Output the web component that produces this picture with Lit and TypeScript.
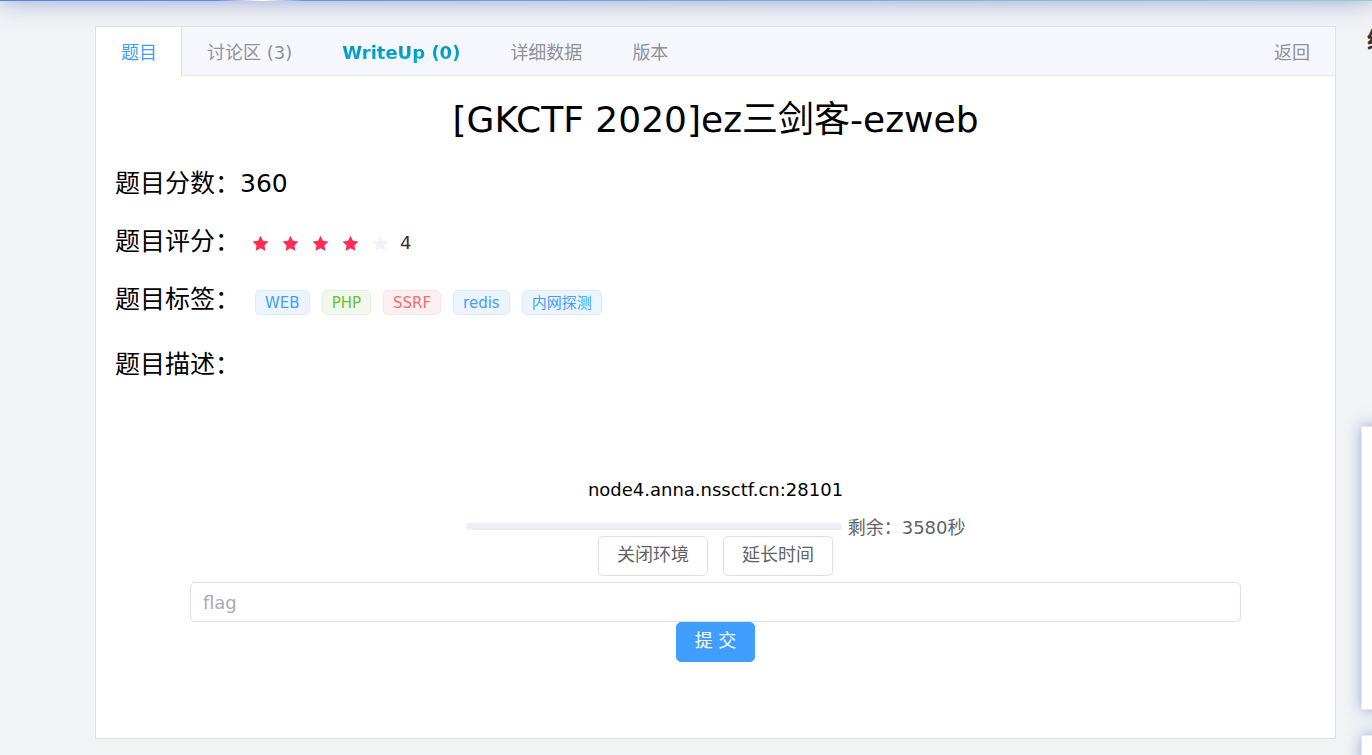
import { LitElement, html, css } from "lit";
import { customElement, state } from "lit/decorators.js";

interface Tab {
  label: string;
  hot?: boolean;
}

@customElement("star-rating")
class StarRating extends LitElement {
  static properties = { value: { type: Number } };
  declare value: number;

  static styles = css`
    :host {
      display: inline-flex;
      align-items: center;
    }
    .star {
      width: 21px;
      height: 21px;
      margin-right: 9px;
      fill: #eff2f7;
    }
    .on {
      fill: #ff2c54;
    }
    .value {
      font-size: 18px;
      line-height: 24px;
      color: #303133;
    }
  `;

  render() {
    return html`
      ${[1, 2, 3, 4, 5].map(
        (n) => html`<svg class=${n <= this.value ? "star on" : "star"} viewBox="0 0 1024 1024" aria-hidden="true">
          <path d="M283.84 867.84 512 747.776l228.16 119.936a6.4 6.4 0 0 0 9.28-6.72l-43.52-254.08 184.512-179.904a6.4 6.4 0 0 0-3.52-10.88l-255.104-37.12L517.76 147.904a6.4 6.4 0 0 0-11.52 0L392.192 379.072l-255.104 37.12a6.4 6.4 0 0 0-3.52 10.88L318.08 606.976l-43.584 254.08a6.4 6.4 0 0 0 9.28 6.72z"></path>
        </svg>`
      )}
      <span class="value">${this.value}</span>
    `;
  }
}

@customElement("app-root")
class AppRoot extends LitElement {
  @state() active = 0;

  tabs: Tab[] = [
    { label: "题目" },
    { label: "讨论区 (3)" },
    { label: "WriteUp (0)", hot: true },
    { label: "详细数据" },
    { label: "版本" },
  ];

  tags = [
    { text: "WEB", kind: "primary" },
    { text: "PHP", kind: "success" },
    { text: "SSRF", kind: "danger" },
    { text: "redis", kind: "primary" },
    { text: "内网探测", kind: "primary" },
  ];

  static styles = css`
    :host {
      display: block;
      min-height: 100vh;
      overflow: hidden;
      background: #f2f3f5;
      color: #000;
      font-family: Verdana, "DejaVu Sans", "Noto Sans CJK SC", sans-serif;
      font-size: 18px;
      line-height: 24px;
    }
    * {
      box-sizing: border-box;
    }
    .topbar {
      height: 60px;
      margin-top: -59px;
      background:
        radial-gradient(ellipse 45px 20px at 262px 100%, #fff, transparent) no-repeat,
        linear-gradient(90deg, #4688f1, #8fd0c8);
      box-shadow: 0 0 24px rgba(62, 79, 177, 0.5);
    }
    .page {
      display: grid;
      grid-template-columns: minmax(0, 1fr) 11px;
      column-gap: 25px;
      padding: 25px 0 16px 95px;
    }
    .panel {
      position: relative;
      background: #fff;
      border: 1px solid #dcdfe6;
      padding-bottom: 76px;
    }
    .tabs {
      display: flex;
      background: #f5f7fc;
      border-bottom: 1px solid #e4e7ed;
    }
    .tab {
      height: 49px;
      margin: 0 0 -1px;
      padding: 2px 24px 0 25px;
      border: 0;
      border-right: 1px solid transparent;
      background: none;
      color: #909399;
      font: inherit;
      cursor: pointer;
    }
    .tab.active {
      background: #fff;
      border-right-color: #dcdfe6;
      color: #409eff;
    }
    .hot {
      font-weight: bold;
      background: linear-gradient(#0288b8, #00b4dc);
      background-clip: text;
      -webkit-background-clip: text;
      color: transparent;
    }
    .back {
      margin-left: auto;
    }
    .body {
      padding: 20px 19px 0;
    }
    h1 {
      margin: 0;
      font-size: 36px;
      line-height: 48px;
      font-weight: 400;
      text-align: center;
    }
    .facts {
      margin: 21px 0 0;
    }
    .fact {
      display: flex;
      align-items: center;
      height: 58px;
      font-size: 25px;
      line-height: 34px;
    }
    .fact:first-child {
      height: 38px;
      margin-bottom: 10px;
    }
    .fact:last-child {
      height: 72px;
    }
    dt,
    dd {
      margin: 0;
    }
    dd.rating {
      display: flex;
      padding: 2px 0 0 10px;
    }
    .tags {
      display: flex;
      gap: 12px;
      padding: 4px 0 0 15px;
    }
    .tag {
      padding: 1px 9px 0;
      border: 1px solid #d9ecff;
      border-radius: 5px;
      background: #ecf5ff;
      color: #409eff;
      font-size: 15px;
      line-height: 22px;
    }
    .success {
      background: #f0f9eb;
      border-color: #e1f3d8;
      color: #67c23a;
    }
    .danger {
      background: #fef0f0;
      border-color: #fde2e2;
      color: #f56c6c;
    }
    .env {
      display: flex;
      flex-direction: column;
      align-items: center;
      padding-top: 77px;
    }
    .timer {
      display: flex;
      align-items: center;
      gap: 6px;
      width: 500px;
      max-width: 100%;
      margin-top: 14px;
      color: #606266;
    }
    .track {
      flex: 1;
      height: 7px;
      margin-bottom: 3px;
      border-radius: 4px;
      background: #ebeef5;
    }
    .row {
      display: flex;
      gap: 15px;
      margin-top: -4px;
    }
    .btn {
      height: 40px;
      padding: 0 18px 2px;
      border: 1px solid #dcdfe6;
      border-radius: 5px;
      background: #fff;
      color: #606266;
      font: inherit;
      cursor: pointer;
    }
    .form {
      display: flex;
      flex-direction: column;
      align-items: center;
      width: 1051px;
      max-width: 100%;
      margin-top: 6px;
    }
    .flag {
      width: 100%;
      height: 40px;
      padding: 0 12px;
      border: 1px solid #dcdfe6;
      border-radius: 5px;
      background: #fff;
      color: #606266;
      font: inherit;
      outline: none;
    }
    .flag::placeholder {
      color: #a8abb2;
      opacity: 1;
    }
    .submit {
      border-color: #409eff;
      background: #409eff;
      color: #fff;
    }
    .side {
      display: flex;
      flex-direction: column;
      width: 300px;
      height: 0;
    }
    .side h2 {
      margin: 0 0 370px 6px;
      font-size: 22px;
      line-height: 30px;
      color: #303133;
    }
    .card {
      flex: none;
      height: 284px;
      margin-bottom: 25px;
      background: #fff;
      border: 1px solid #e4e7ed;
      box-shadow: 0 0 14px rgba(62, 99, 187, 0.5);
    }
  `;

  render() {
    return html`
      <header class="topbar"></header>
      <div class="page">
        <main class="panel">
          <nav class="tabs">
            ${this.tabs.map(
              (t, i) => html`<button
                class=${i === this.active ? "tab active" : "tab"}
                @click=${() => (this.active = i)}
              ><span class=${t.hot ? "hot" : ""}>${t.label}</span></button>`
            )}
            <button class="tab back">返回</button>
          </nav>
          <div class="body">
            <h1>[GKCTF 2020]ez三剑客-ezweb</h1>
            <dl class="facts">
              <div class="fact"><dt>题目分数：</dt><dd>360</dd></div>
              <div class="fact"><dt>题目评分：</dt><dd class="rating"><star-rating .value=${4}></star-rating></dd></div>
              <div class="fact">
                <dt>题目标签：</dt>
                <dd class="tags">${this.tags.map((t) => html`<span class="tag ${t.kind}">${t.text}</span>`)}</dd>
              </div>
              <div class="fact"><dt>题目描述：</dt><dd></dd></div>
            </dl>
            <section class="env">
              <div>node4.anna.nssctf.cn:28101</div>
              <div class="timer">
                <div class="track" role="progressbar" aria-label="剩余"></div>
                <span>剩余：3580秒</span>
              </div>
              <div class="row">
                <button class="btn">关闭环境</button>
                <button class="btn">延长时间</button>
              </div>
              <form class="form" @submit=${(e: Event) => e.preventDefault()}>
                <input class="flag" type="text" aria-label="flag" placeholder="flag" />
                <button class="btn submit">提 交</button>
              </form>
            </section>
          </div>
        </main>
        <aside class="side">
          <h2>统计</h2>
          <div class="card"></div>
          <div class="card"></div>
        </aside>
      </div>
    `;
  }
}
